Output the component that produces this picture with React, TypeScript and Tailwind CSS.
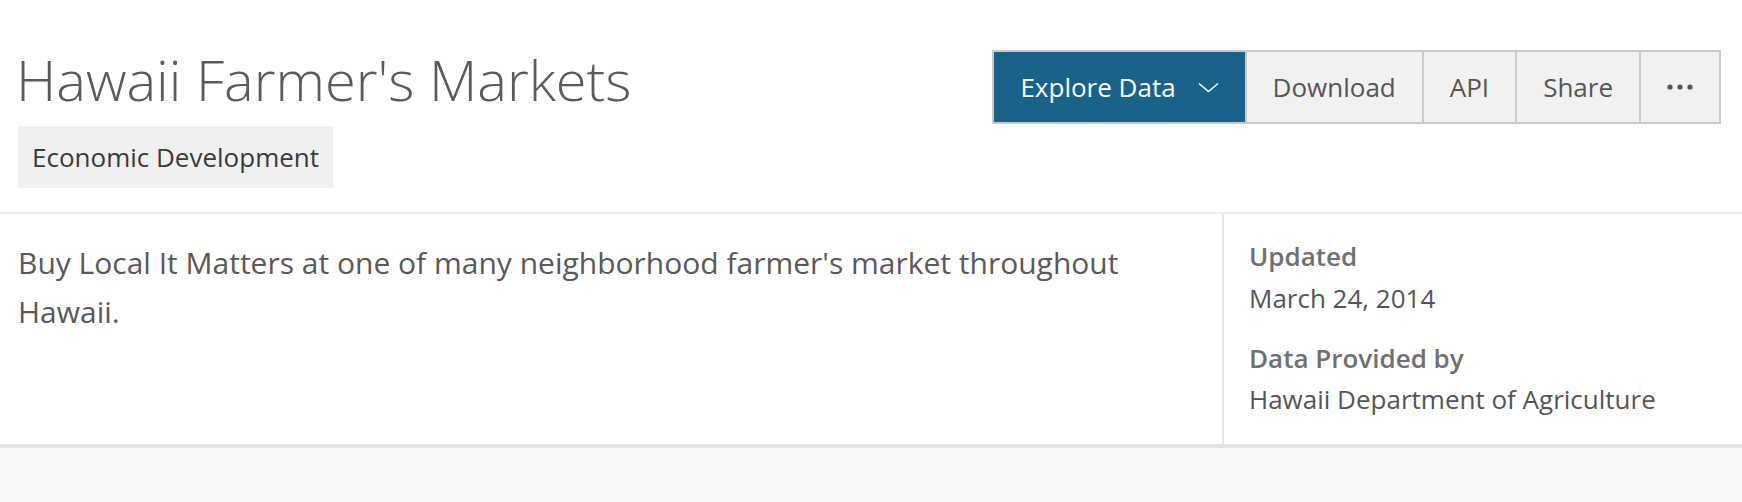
import React from "react";

function Chevron() {
  return (
    <svg width="21" height="11" viewBox="0 0 21 11" fill="none" className="ml-[22px]">
      <path d="M1 1.5 L10.5 9.5 L20 1.5" stroke="white" strokeWidth="1.4" />
    </svg>
  );
}

export default function App() {
  return (
    <div className="w-full bg-white font-['Open_Sans',sans-serif]">
      <header className="flex items-start justify-between pl-[18px] pr-[21px] pt-[44px] pb-[24px] border-b-2 border-[#eeeeee]">
        <div className="flex flex-col items-start">
          <h1 className="-ml-[2px] text-[56px] font-light leading-[71px] text-[#5b5b5b]">
            Hawaii Farmer's Markets
          </h1>
          <span className="mt-[11px] inline-block h-[62px] bg-[#f0f0f0] px-[14px] text-[26px] leading-[62px] text-[#3a3a3a]">
            Economic Development
          </span>
        </div>
        <div className="mt-[6px] flex h-[74px] border-2 border-[#c9c9c9] bg-[#f1f1f1] text-[26px] text-[#555555]">
          <button className="flex items-center bg-[#19628a] pl-[26px] pr-[26px] text-white">
            Explore Data
            <Chevron />
          </button>
          <button className="flex items-center border-l-2 border-[#c9c9c9] px-[26px]">Download</button>
          <button className="flex items-center border-l-2 border-[#c9c9c9] px-[26px]">API</button>
          <button className="flex items-center border-l-2 border-[#c9c9c9] px-[26px]">Share</button>
          <button className="flex items-center border-l-2 border-[#c9c9c9] px-[26px]">
            <svg width="26" height="6" viewBox="0 0 26 6">
              <circle cx="3" cy="3" r="2.6" fill="#555555" />
              <circle cx="13" cy="3" r="2.6" fill="#555555" />
              <circle cx="23" cy="3" r="2.6" fill="#555555" />
            </svg>
          </button>
        </div>
      </header>
      <section className="flex h-[234px] border-b-4 border-[#e3e3e3]">
        <div className="flex-1 pl-[18px] pt-[24px] pr-[40px]">
          <p className="max-w-[1130px] text-[30px] leading-[49px] text-[#595959]">
            Buy Local It Matters at one of many neighborhood farmer's market throughout Hawaii.
          </p>
        </div>
        <div className="w-[520px] border-l-2 border-[#e6e6e6] pl-[25px] pt-[21px]">
          <div className="text-[26px] font-semibold leading-[42px] text-[#707070]">Updated</div>
          <div className="text-[26px] leading-[42px] text-[#555555]">March 24, 2014</div>
          <div className="mt-[18px] text-[26px] font-semibold leading-[42px] text-[#707070]">Data Provided by</div>
          <div className="text-[26px] leading-[41px] text-[#555555]">Hawaii Department of Agriculture</div>
        </div>
      </section>
      <div className="h-[54px] bg-[#f7f7f7]" />
    </div>
  );
}
